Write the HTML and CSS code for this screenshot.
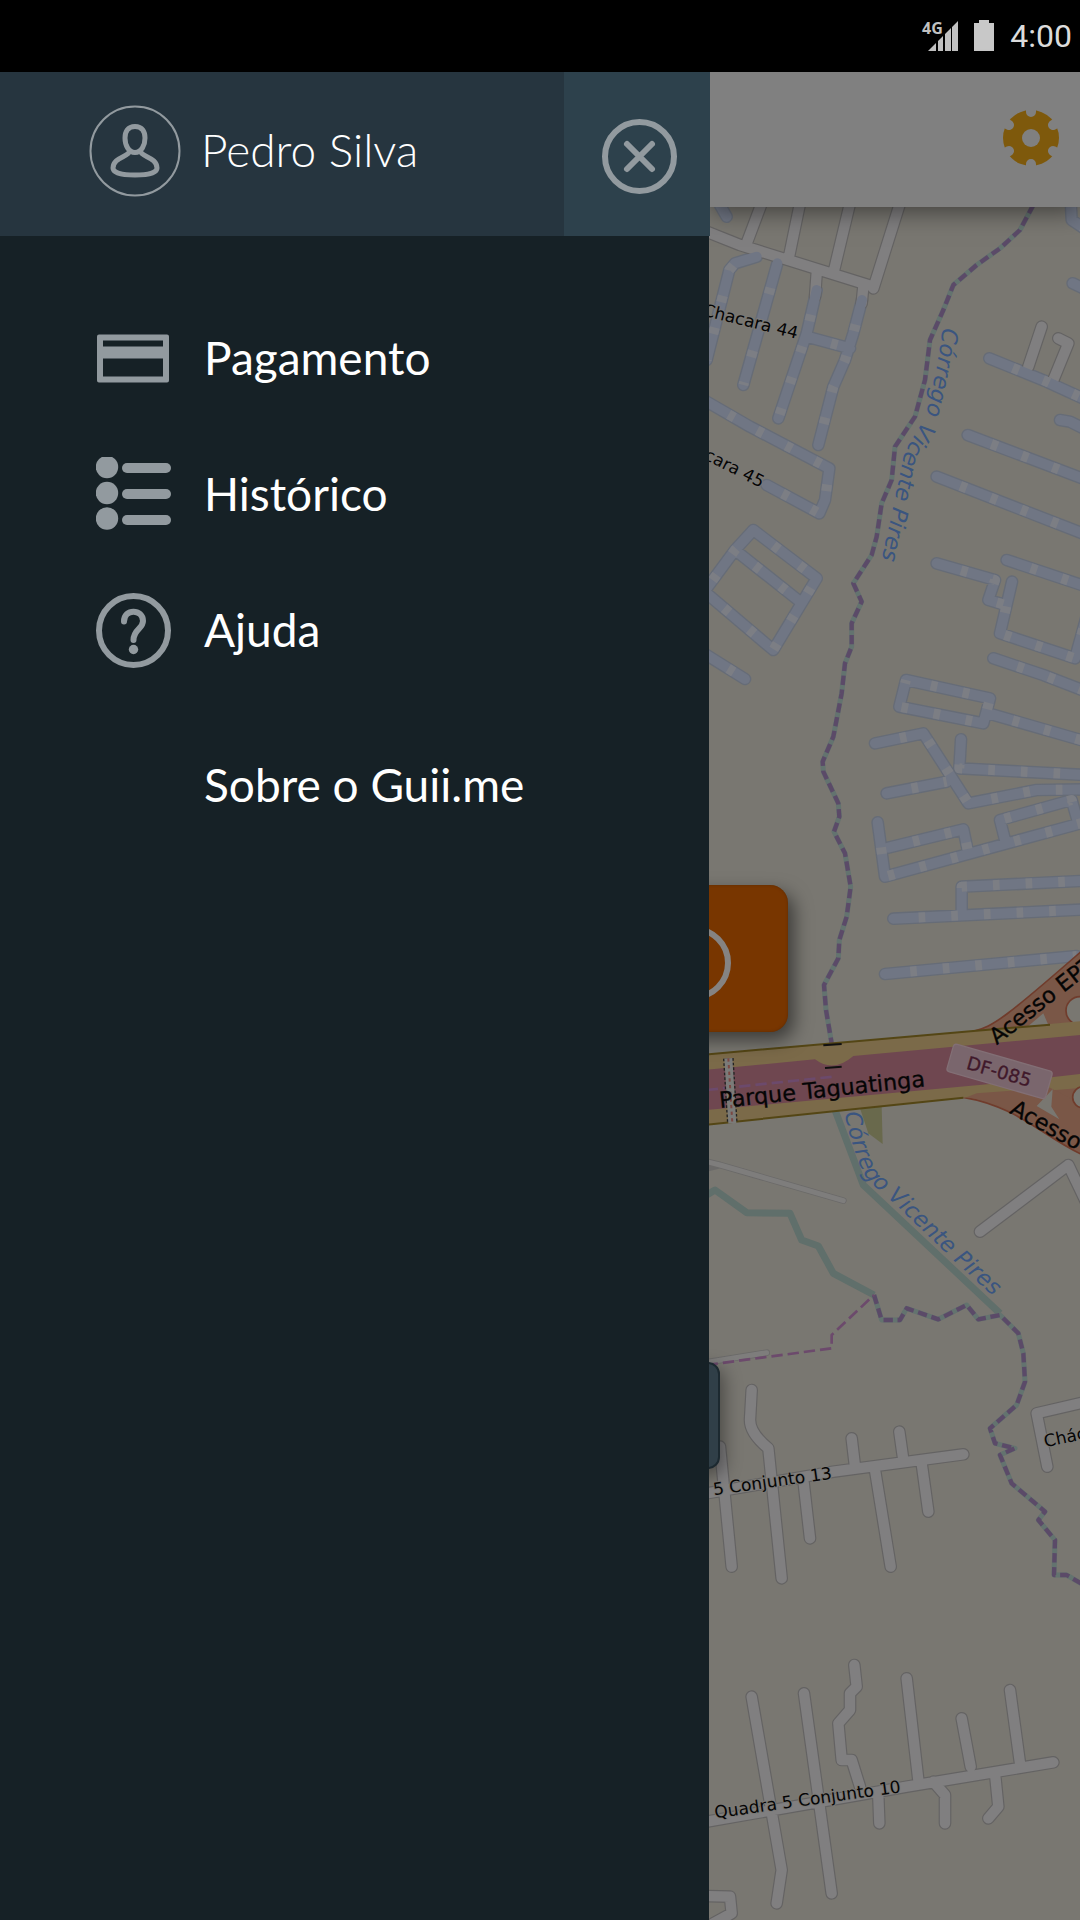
FILE: index.html
```html
<!DOCTYPE html>
<html lang="pt-BR">
<head>
<meta charset="utf-8">
<meta name="viewport" content="width=device-width, initial-scale=1">
<title>Guii.me</title>
<link rel="stylesheet" href="styles.css">
</head>
<body>
<header class="status">
  <svg class="signal" viewBox="0 0 36 32" role="img" aria-label="Sinal 4G">
    <text class="signal-label" x="0" y="14">4G</text>
    <path d="M6 31 14 23V31ZM16 21 21 16V31H16ZM23 14 29 8V31H23ZM30 7 36 1V31H30Z"/>
  </svg>
  <svg class="battery" viewBox="0 0 20 32" role="img" aria-label="Bateria"><path d="M5 0H15V3H20V31H0V3H5Z"/></svg>
  <time class="clock">4:00</time>
</header>

<div class="app">
  <aside class="drawer">
    <div class="profile">
      <svg class="avatar" viewBox="0 0 92 92" aria-hidden="true">
        <circle cx="46" cy="46" r="44.5" stroke-width="2"/>
        <path stroke-width="5" d="M46 21.500C38.500 21.500 36 27 36 33C36 40 39.500 47.500 46 47.500C52.500 47.500 56 40 56 33C56 27 53.500 21.500 46 21.500ZM40.500 46C40 52 24 52 24 63C24 68 33 70 46 70C59 70 68 68 68 63C68 52 52 52 51.500 46"/>
      </svg>
      <span class="name">Pedro Silva</span>
      <button class="close" type="button" aria-label="Fechar menu">
        <svg class="icon" viewBox="0 0 75 75" aria-hidden="true"><circle cx="37.500" cy="37.500" r="34.500"/><path d="M25 25 50 50M50 25 25 50"/></svg>
      </button>
    </div>
    <nav class="menu">
      <a class="item" href="#pagamento">
        <svg class="icon" viewBox="0 0 75 75" aria-hidden="true"><path class="solid" fill-rule="evenodd" d="M3 13.500H71A2 2 0 0 1 73 15.500V59.500A2 2 0 0 1 71 61.500H3A2 2 0 0 1 1 59.500V15.500A2 2 0 0 1 3 13.500ZM7 19.500V25.500H67V19.500ZM7 37.500V55.500H67V37.500Z"/></svg>
        <span>Pagamento</span>
      </a>
      <a class="item" href="#historico">
        <svg class="icon" viewBox="0 0 75 75" aria-hidden="true"><g class="solid"><circle cx="11" cy="10" r="11.200"/><circle cx="11" cy="36" r="11.200"/><circle cx="11" cy="61.500" r="11.200"/><rect x="26" y="6" width="49" height="10" rx="5"/><rect x="26" y="32" width="49" height="10" rx="5"/><rect x="26" y="58" width="49" height="10" rx="5"/></g></svg>
        <span>Histórico</span>
      </a>
      <a class="item" href="#ajuda">
        <svg class="icon" viewBox="0 0 75 75" aria-hidden="true"><circle cx="37.500" cy="37.500" r="34.500"/><path d="M28 28.500C28 15 47 16 47 28C47 36 37.500 36 37.500 47"/><circle class="solid" cx="37.500" cy="56.500" r="4.700"/></svg>
        <span>Ajuda</span>
      </a>
      <a class="item about" href="#sobre"><span>Sobre o Guii.me</span></a>
    </nav>
  </aside>

  <main class="screen">
    <div class="topbar">
      <button class="settings" type="button" aria-label="Configurações">
        <svg class="gear" viewBox="-28 -28 56 56" aria-hidden="true">
          <circle class="gear-body" r="28"/>
          <circle class="gear-cut" r="9"/>
          <path class="gear-notch" d="M0-26V-30M0 26V30M22-13 28-16M22 13 28 16M-22-13-28-16M-22 13-28 16"/>
        </svg>
      </button>
    </div>
    <section class="map" aria-label="Mapa">
      <svg class="tiles" viewBox="27 21 1113 5139" preserveAspectRatio="xMinYMin slice">
        <defs>
          <path id="streets" d="M20 95 120 135 520 260M300 10 265 180M450 10 400 220M600 10 520 265M185 10 140 130M350 220 345 290M490 260 485 310M1025 380 985 500M1075 415 1105 430 1060 540M1160 3010 1105 2895 840 3095M155 3570 150 3660Q150 3700 205 3745L245 4135M60 3740 95 4100M455 3715 465 3800M598 3695 610 3780M790 3763 400 3815 20 3880M525 3810 572 4100M665 3790 685 3935M310 3840 330 4015M1160 3605 1010 3640 1042 3800M155 4490 245 5010 230 5110M312 4480 395 5080M463 4395 470 4460 450 4480 450 4530 415 4570 425 4680 455 4680 480 4760M535 4790 538 4870M620 4435 655 4740M785 4555 812 4700M930 4470 960 4690M1060 4687 620 4760 20 4865M700 4745 735 4785 735 4870M885 4720 895 4820 865 4855M20 5088 90 5090 95 5140 40 5170"/>
          <path id="lanes" d="M170 170 105 190 88 210 20 480M232 190 130 555M350 270 320 400 235 655M486 300 460 400 435 480 400 560 355 735M320 410 450 445M20 605 150 680 388 805 375 900 358 940 200 855M60 15 80 50M160 990 105 1050 20 1165M160 990 350 1135 220 1350 20 1180M105 1050 300 1205M20 1365 135 1437M1113 20 1115 60 1160 90M1118 250 1160 270M868 475 1040 545 1160 600M1080 660 1110 665 1160 690M803 705 1160 840M710 830 1160 1005M710 1090 885 1140 865 1200 910 1213M936 1145 900 1300 1125 1375 1165 1230M920 1080 1160 1160M880 1375 1030 1425 1160 1475M618 1440 870 1495 850 1570 598 1520ZM865 1540 1160 1625M525 1630 670 1600 805 1810 1010 1770 1160 1768M783 1618 778 1705 1160 1725M560 1780 740 1745M533 1867 555 2030 1160 1865M565 1943 790 1888 805 1960M915 1920 900 1860 1115 1800 1135 1870M580 2156 1160 2128M785 2140 785 2060 1160 2042M555 2322 1130 2268"/>
          <path id="border" d="M1000 15 960 90 900 145 830 195 760 255 730 330 690 420 675 540 645 650 585 740 575 840 545 910 530 1010 515 1065 460 1150 485 1205 455 1270 455 1340 435 1390 425 1480 400 1610 368 1685 370 1715 415 1810 418 1850 402 1895 435 1960 452 2060 440 2150 418 2220 415 2275 372 2355 378 2430 395 2530M522 3285 545 3360 600 3360 620 3325 715 3358 800 3315 835 3358 900 3345 955 3400 970 3460 975 3545 950 3615 870 3685 885 3730 945 3745 900 3765 935 3850 1035 3935 1015 3960 1065 4020 1062 4125 1100 4125 1160 4160"/>
          <path id="stream-north" d="M728 382C716 480 700 560 678 640C660 690 625 720 608 780C590 870 572 960 540 1100"/>
          <path id="stream-south" d="M434 2740C450 2820 480 2905 500 2935L540 2975 585 3012 768 3188 920 3325"/>
        </defs>
        <use href="#lanes" class="lane-case"/>
        <use href="#streets" class="street-case"/>
        <use href="#streets" class="street"/>
        <use href="#lanes" class="lane"/>
        <use href="#lanes" class="lane-arrow"/>
        <path class="track-case" d="M20 2885 60 2895 430 3002M20 2905 60 2895M20 3487 200 3458"/>
        <path class="track" d="M20 2885 60 2895 430 3002M20 3487 200 3458"/>
        <path class="wood" d="M480 2725 545 2720 548 2832 505 2800Z"/>
        <path class="river" d="M20 2985 45 2970 140 3038 270 3040 305 3120 355 3138 400 3220 522 3285M405 2730 490 2955 900 3340"/>
        <use href="#border" class="border-water"/>
        <use href="#border" class="border-dash"/>
        <path class="limit" d="M20 3495 395 3445 395 3405 522 3285"/>

        <path class="ramp" d="M820 2494C880 2480 920 2450 1160 2240V2870C1040 2820 960 2720 790 2692Z"/>
        <circle class="ground ring" cx="1140" cy="2432" r="42"/>
        <path class="verge" d="M20 2563 820 2493 1160 2462V2662L790 2693 20 2774Z"/>
        <path class="ground" d="M985 2478 1030 2440 1045 2475Z"/>
        <path class="ramp-fill" d="M830 2680 1050 2663 1160 2720V2860C1040 2810 960 2715 800 2692Z"/>
        <path class="ground" d="M1058 2668 1054 2720 1078 2758 1010 2718Z"/>
        <circle class="ground ring" cx="1150" cy="2692" r="32"/>
        <path class="motorway" d="M20 2609 345 2578Q400 2620 460 2568L1160 2503V2620L870 2652 20 2730Z"/>
        <path class="verge-edge" d="M20 2563 820 2493 1050 2474M20 2774 790 2693"/>
        <path class="limit" d="M20 2670 400 2630"/>
        <path class="bridge" d="M370 2536 425 2532M375 2604 425 2600"/>
        <path class="cross-case" d="M85 2575 97 2770"/>
        <path class="cross" d="M85 2575 97 2770"/>
        <path class="cross-dash" d="M85 2575 97 2770"/>
        <g transform="rotate(16 898 2613)">
          <rect class="shield" x="745" y="2571" width="308" height="86" rx="10"/>
          <text class="ref" x="898" y="2634" text-anchor="middle">DF-085</text>
        </g>
        <text class="road big" transform="translate(60 2724) rotate(-6)">Parque Taguatinga</text>
        <text class="road big" transform="translate(890 2536) rotate(-38)">Acesso EPTG</text>
        <text class="road big" transform="translate(926 2738) rotate(29)">Acesso</text>
        <text class="road" transform="translate(6 346) rotate(14)">Chacara 44</text>
        <text class="road" transform="translate(10 776) rotate(27)">cara 45</text>
        <text class="road" transform="translate(42 3886) rotate(-8)">5 Conjunto 13</text>
        <text class="road" transform="translate(1036 3742) rotate(-12)">Chácara</text>
        <text class="road" transform="translate(46 4855) rotate(-8)">Quadra 5 Conjunto 10</text>
        <text class="water"><textPath href="#stream-north">Córrego Vicente Pires</textPath></text>
        <text class="water"><textPath href="#stream-south">Córrego Vicente Pires</textPath></text>
      </svg>
      <button class="locate" type="button" aria-label="Minha localização"><span class="locate-ring"></span></button>
      <button class="request" type="button" aria-label="Chamar"></button>
    </section>
  </main>
</div>
</body>
</html>
```
FILE: styles.css
```css
* { box-sizing: border-box; }

body {
  margin: 0;
  min-height: 100vh;
  display: flex;
  flex-direction: column;
  background: #162126;
  font-family: Lato, sans-serif;
}

button {
  padding: 0;
  border: 0;
  background: none;
}

svg { display: block; }

.status {
  display: flex;
  justify-content: flex-end;
  align-items: center;
  gap: 16px;
  height: 72px;
  padding-right: 8px;
  background: #000;
  color: #dcdcdc;
}

.signal { width: 36px; height: 32px; overflow: visible; fill: #c1c1c1; }
.signal-label { font: bold 16px "Liberation Sans Narrow", "Open Sans", sans-serif; }
.battery { width: 20px; height: 32px; fill: #c8c8c8; }
.clock { font: 32px/40px Roboto, sans-serif; }

.app {
  flex: 1;
  display: flex;
}

.drawer {
  flex: 0 1 709px;
  position: relative;
  z-index: 2;
  background: #162126;
  color: #fff;
}

.profile {
  display: flex;
  align-items: center;
  height: 164px;
  margin-right: -1px;
  padding-left: 89px;
  background: #26353f;
}

.avatar {
  width: 92px;
  height: 92px;
  margin-bottom: 6px;
  fill: none;
  stroke: #929a9f;
}

.name {
  flex: 1;
  padding: 0 0 8px 20px;
  font-size: 46px;
  font-weight: 300;
  line-height: 56px;
}

.close {
  display: grid;
  place-items: center;
  align-self: stretch;
  width: 146px;
  padding: 4px 0 0 4px;
  background: #2d414c;
}

.icon {
  width: 75px;
  height: 75px;
  fill: none;
  stroke: #929a9f;
  stroke-width: 6;
  stroke-linecap: round;
}

.solid { fill: #929a9f; stroke: none; }

.menu {
  display: flex;
  flex-direction: column;
  padding: 54px 0 0 96px;
}

.item {
  display: flex;
  align-items: center;
  gap: 33px;
  height: 136px;
  color: inherit;
  font-size: 46px;
  line-height: 56px;
  text-decoration: none;
}

.about { margin-top: 19px; padding-left: 108px; }

.screen {
  flex: 1;
  display: flex;
  flex-direction: column;
  min-width: 0;
}

.topbar {
  position: relative;
  z-index: 1;
  display: flex;
  justify-content: flex-end;
  align-items: center;
  height: 135px;
  padding: 0 21px 3px 0;
  background: #808080;
  box-shadow: 0 4px 24px rgba(0, 0, 0, .5);
}

.gear { width: 56px; height: 56px; }
.gear-body { fill: #7e590c; }
.gear-cut { fill: #808080; }
.gear-notch { stroke: #808080; stroke-width: 10; stroke-linecap: round; }

.map {
  flex: 1;
  position: relative;
  overflow: hidden;
  background: #797771;
}

.tiles {
  width: 100%;
  height: 100%;
  fill: none;
  stroke-linejoin: round;
}

.lane-case { stroke: #666c77; stroke-width: 38; stroke-linecap: round; }
.lane { stroke: #707684; stroke-width: 30; stroke-linecap: round; }
.lane-arrow { stroke: #7c7e84; stroke-width: 30; stroke-dasharray: 0 76 20 2; }
.street-case { stroke: #646363; stroke-width: 38; stroke-linecap: round; }
.street { stroke: #807f80; stroke-width: 31; stroke-linecap: round; }
.track-case { stroke: #6b6a69; stroke-width: 20; stroke-linecap: round; }
.track { stroke: #7e7d7c; stroke-width: 15; stroke-linecap: round; }
.wood { fill: #69694c; }
.river { stroke: #606f6b; stroke-width: 21; }
.border-water { stroke: #63736f; stroke-width: 15; }
.border-dash { stroke: #5b4a68; stroke-width: 13; stroke-dasharray: 28 14; }
.limit { stroke: #6c4a6c; stroke-width: 8; stroke-dasharray: 34 15; }
.ramp { fill: #7a5747; stroke: #703c2c; stroke-width: 5; }
.ramp-fill { fill: #7a5747; }
.ground { fill: #797771; }
.ring { stroke: #703c2c; stroke-width: 5; }
.verge { fill: #7b6a49; }
.verge-edge { stroke: #544615; stroke-width: 6; }
.motorway { fill: #6f4750; }
.bridge { stroke: #111; stroke-width: 6; }
.cross-case { stroke: #222; stroke-width: 32; stroke-dasharray: 8 6; }
.cross { stroke: #7b7b79; stroke-width: 24; }
.cross-dash { stroke: #7b4843; stroke-width: 6; stroke-dasharray: 10 10; }
.shield { fill: #7a666d; stroke: #826f75; stroke-width: 4; }

.road,
.ref,
.water {
  font-family: "DejaVu Sans", sans-serif;
  font-size: 51px;
  paint-order: stroke;
}

.road { fill: #050505; stroke: #7b7975; stroke-width: 6; }
.road.big { font-size: 67px; stroke: #0b0b0b; stroke-width: 1; }
.ref { font-size: 55px; fill: #40182a; stroke: #40182a; stroke-width: 1; }
.water { font-size: 67px; font-style: italic; fill: #3a5580; }

/* Floating map actions, partly under the open drawer */
.locate {
  position: absolute;
  top: 678px;
  left: -67px;
  width: 146px;
  height: 147px;
  border-radius: 18px;
  background: #783600;
  box-shadow: inset 0 0 3px #5e2b00, 6px 8px 18px rgba(0, 0, 0, .5);
}

.locate-ring {
  position: absolute;
  top: 41px;
  left: 15px;
  width: 74px;
  height: 74px;
  border: 6px solid #858382;
  border-radius: 50%;
}

.request {
  position: absolute;
  top: 1155px;
  left: -320px;
  width: 331px;
  height: 107px;
  border: 2px solid #1c2930;
  border-radius: 12px;
  background: #303f48;
  box-shadow: 4px 6px 18px rgba(0, 0, 0, .4);
}
```
